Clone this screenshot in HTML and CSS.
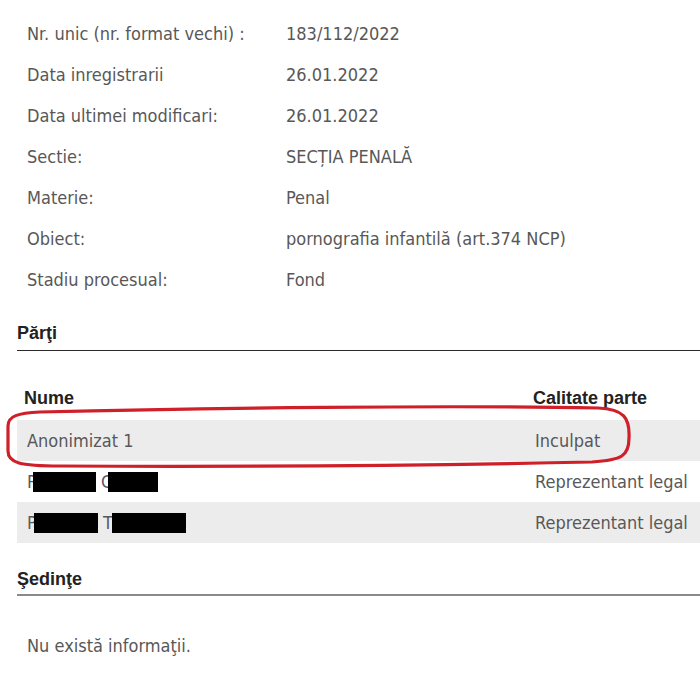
FILE: index.html
```html
<!DOCTYPE html>
<html lang="ro">
<head>
<meta charset="utf-8">
<title>Dosar</title>
<link rel="stylesheet" href="styles.css">
</head>
<body>
<div class="page">
  <div class="info">
    <div class="lbl">Nr. unic (nr. format vechi) :</div><div class="val">183/112/2022</div>
    <div class="lbl">Data inregistrarii</div><div class="val">26.01.2022</div>
    <div class="lbl">Data ultimei modificari:</div><div class="val">26.01.2022</div>
    <div class="lbl">Sectie:</div><div class="val">SECȚIA PENALĂ</div>
    <div class="lbl">Materie:</div><div class="val">Penal</div>
    <div class="lbl">Obiect:</div><div class="val">pornografia infantilă (art.374 NCP)</div>
    <div class="lbl">Stadiu procesual:</div><div class="val">Fond</div>
  </div>

  <h2 class="sec sec-parti">Părţi</h2>

  <div class="table">
    <div class="thead">
      <div class="c1">Nume</div><div class="c2">Calitate parte</div>
    </div>
    <div class="tr odd">
      <div class="c1">Anonimizat 1</div><div class="c2">Inculpat</div>
    </div>
    <div class="tr">
      <div class="c1">P<span class="redact r1"></span> G<span class="redact r2"></span></div><div class="c2">Reprezentant legal</div>
    </div>
    <div class="tr odd">
      <div class="c1">P<span class="redact r3"></span> T<span class="redact r4"></span></div><div class="c2">Reprezentant legal</div>
    </div>
  </div>

  <h2 class="sec sec-sed">Şedinţe</h2>
  <p class="empty">Nu există informaţii.</p>

  <svg class="mark" width="700" height="675" viewBox="0 0 700 675">
    <path d="M 40 412 C 200 408 450 405 598 408 C 624 409 630 418 629 438 C 629 456 622 460 592 462 C 450 465 250 467 60 466 C 20 466 8 463 8 451 L 8 426 C 8 416 18 413 40 412 Z" fill="none" stroke="#cf1f29" stroke-width="3.2" stroke-linejoin="round"/>
  </svg>
</div>
</body>
</html>
```

FILE: styles.css
```css
html, body {
  margin: 0;
  padding: 0;
  background: #fff;
}
body {
  width: 700px;
  height: 675px;
  overflow: hidden;
}
.page {
  position: relative;
  padding-left: 17px;
  padding-top: 13px;
  font-family: "DejaVu Sans", Tahoma, sans-serif;
  font-stretch: condensed;
  color: #585858;
}
.info {
  display: grid;
  grid-template-columns: 269px 1fr;
  grid-auto-rows: 41px;
  align-items: center;
  font-size: 18px;
}
.lbl {
  padding-left: 10px;
}
.sec {
  margin: 0;
  font-family: "Liberation Sans", Arial, sans-serif;
  font-stretch: normal;
  font-weight: bold;
  font-size: 18px;
  line-height: 20px;
  color: #222;
}
.sec-parti {
  margin-top: 23px;
  padding-bottom: 7px;
  border-bottom: 1px solid #2a2a2a;
}
.table {
  margin-top: 36px;
  font-size: 18px;
}
.thead {
  display: flex;
  font-family: "Liberation Sans", Arial, sans-serif;
  font-stretch: normal;
  font-weight: bold;
  font-size: 18px;
  color: #222;
  height: 22px;
  align-items: center;
  margin-bottom: 11px;
}
.thead .c1 { padding-left: 7px; width: 509px; }
.tr {
  display: flex;
  align-items: center;
  height: 41px;
}
.tr.odd { background: #ececec; }
.tr .c1 { padding-left: 10px; width: 508px; }
.redact {
  display: inline-block;
  background: #000;
  height: 20px;
  vertical-align: -4px;
}
.r1 { width: 63px; margin-left: -4px; }
.r2 { width: 50px; margin-left: -5px; }
.r3 { width: 64px; margin-left: -3px; }
.r4 { width: 74px; margin-left: -1px; }
.sec-sed {
  margin-top: 26px;
  padding-bottom: 5px;
  border-bottom: 2px solid #8a8a8a;
}
.empty {
  margin: 39px 0 0;
  padding-left: 10px;
  font-size: 18px;
}
.mark {
  position: absolute;
  left: 0;
  top: 0;
  pointer-events: none;
}
```
